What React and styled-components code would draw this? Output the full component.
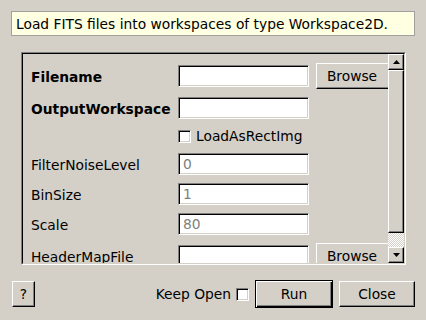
import React from 'react';
import styled, { createGlobalStyle, css } from 'styled-components';

const Global = createGlobalStyle`
  html, body { margin: 0; padding: 0; background: #d4d0c8; }
  body {
    font-family: "DejaVu Sans", "Liberation Sans", sans-serif;
    font-size: 13.8px;
    color: #000;
  }
  * { box-sizing: border-box; }
`;

const Dialog = styled.div`
  width: 426px;
  height: 320px;
  padding: 11px 11px 0 11px;
  display: flex;
  flex-direction: column;
  background: #d4d0c8;
  overflow: hidden;
`;

const Description = styled.div`
  height: 25px;
  border: 1px solid #a0a0a0;
  background: #ffffe1;
  padding: 0 4px;
  display: flex;
  align-items: center;
  white-space: nowrap;
`;

const Frame = styled.div`
  margin: 16px 0 0 10px;
  width: 385px;
  height: 213px;
  border: 1px solid;
  border-color: #808080 #fff #fff #808080;
`;

const FrameInner = styled.div`
  width: 100%;
  height: 100%;
  border: 1px solid;
  border-color: #000 #d4d0c8 #d4d0c8 #000;
  display: flex;
`;

const Viewport = styled.div`
  flex: 1;
  overflow: hidden;
  padding: 9px 0 0 8px;
  display: flex;
  flex-direction: column;
  gap: 8px;
`;

const Row = styled.div`
  display: flex;
  align-items: center;
  height: ${p => p.$h || 22}px;
  flex: none;
  white-space: nowrap;
`;

const Label = styled.div`
  width: 147px;
  flex: none;
  padding-top: 1px;
  font-weight: ${p => (p.$bold ? 'bold' : 'normal')};
`;

const TextBox = styled.div`
  width: 131px;
  height: 22px;
  flex: none;
  background: #fff;
  border: 1px solid;
  border-color: #808080 #fff #fff #808080;
  box-shadow: inset 1px 1px 0 #000, inset -1px -1px 0 #d4d0c8;
  padding: 0 4px;
  display: flex;
  align-items: center;
  color: ${p => (p.$disabled ? '#808080' : '#000')};
`;

const bevel = css`
  border: 1px solid;
  border-color: #fff #000 #000 #fff;
  box-shadow: inset -1px -1px 0 #808080;
  background: #d4d0c8;
`;

const PushButton = styled.div`
  ${bevel};
  flex: none;
  width: ${p => p.$w}px;
  height: 26px;
  margin-left: ${p => p.$ml || 0}px;
  display: flex;
  align-items: center;
  justify-content: center;
  padding-right: ${p => p.$pr || 0}px;
`;

const DefaultButton = styled.div`
  flex: none;
  width: 78px;
  height: 28px;
  border: 1px solid #000;
  box-shadow: inset 1px 1px 0 #fff, inset -1px -1px 0 #000, inset -2px -2px 0 #808080;
  background: #d4d0c8;
  display: flex;
  align-items: center;
  justify-content: center;
`;

const CheckBox = styled.div`
  width: 13px;
  height: 13px;
  flex: none;
  background: #fff;
  border: 1px solid;
  border-color: #808080 #fff #fff #808080;
  box-shadow: inset 1px 1px 0 #000, inset -1px -1px 0 #d4d0c8;
  margin-right: ${p => p.$mr || 0}px;
  margin-left: ${p => p.$ml || 0}px;
`;

const ScrollBar = styled.div`
  width: 16px;
  flex: none;
  display: flex;
  flex-direction: column;
`;

const ArrowButton = styled.div`
  ${bevel};
  height: 16px;
  flex: none;
  display: flex;
  align-items: center;
  justify-content: center;
`;

const Handle = styled.div`
  ${bevel};
  height: 163px;
  flex: none;
`;

const Track = styled.div`
  flex: 1;
  background-image: conic-gradient(#fff 25%, #d4d0c8 0 50%, #fff 0 75%, #d4d0c8 0);
  background-size: 2px 2px;
`;

const BottomBar = styled.div`
  margin-top: 15px;
  height: 28px;
  display: flex;
  align-items: center;
  white-space: nowrap;
`;

const Spacer = styled.div`
  flex: 1;
`;

const Arrow = ({ down }) => (
  <svg width="7" height="4" viewBox="0 0 7 4">
    <polygon points={down ? '0,0 7,0 3.5,4' : '0,4 7,4 3.5,0'} fill="#000" />
  </svg>
);

export default function App() {
  return (
    <>
      <Global />
      <Dialog>
        <Description>Load FITS files into workspaces of type Workspace2D.</Description>
        <Frame>
          <FrameInner>
            <Viewport>
              <Row $h={26}>
                <Label $bold>Filename</Label>
                <TextBox />
                <PushButton $w={80} $ml={7} $pr={8}>Browse</PushButton>
              </Row>
              <Row>
                <Label $bold>OutputWorkspace</Label>
                <TextBox />
              </Row>
              <Row $h={18}>
                <Label />
                <CheckBox $mr={5} />
                <span>LoadAsRectImg</span>
              </Row>
              <Row>
                <Label>FilterNoiseLevel</Label>
                <TextBox $disabled>0</TextBox>
              </Row>
              <Row>
                <Label>BinSize</Label>
                <TextBox $disabled>1</TextBox>
              </Row>
              <Row>
                <Label>Scale</Label>
                <TextBox $disabled>80</TextBox>
              </Row>
              <Row $h={26}>
                <Label>HeaderMapFile</Label>
                <TextBox />
                <PushButton $w={80} $ml={7} $pr={8}>Browse</PushButton>
              </Row>
            </Viewport>
            <ScrollBar>
              <ArrowButton><Arrow /></ArrowButton>
              <Handle />
              <Track />
              <ArrowButton><Arrow down /></ArrowButton>
            </ScrollBar>
          </FrameInner>
        </Frame>
        <BottomBar>
          <PushButton $w={23} $ml={1}>?</PushButton>
          <Spacer />
          <span>Keep Open</span>
          <CheckBox $ml={5} $mr={6} />
          <DefaultButton>Run</DefaultButton>
          <PushButton $w={76} $ml={6}>Close</PushButton>
        </BottomBar>
      </Dialog>
    </>
  );
}
